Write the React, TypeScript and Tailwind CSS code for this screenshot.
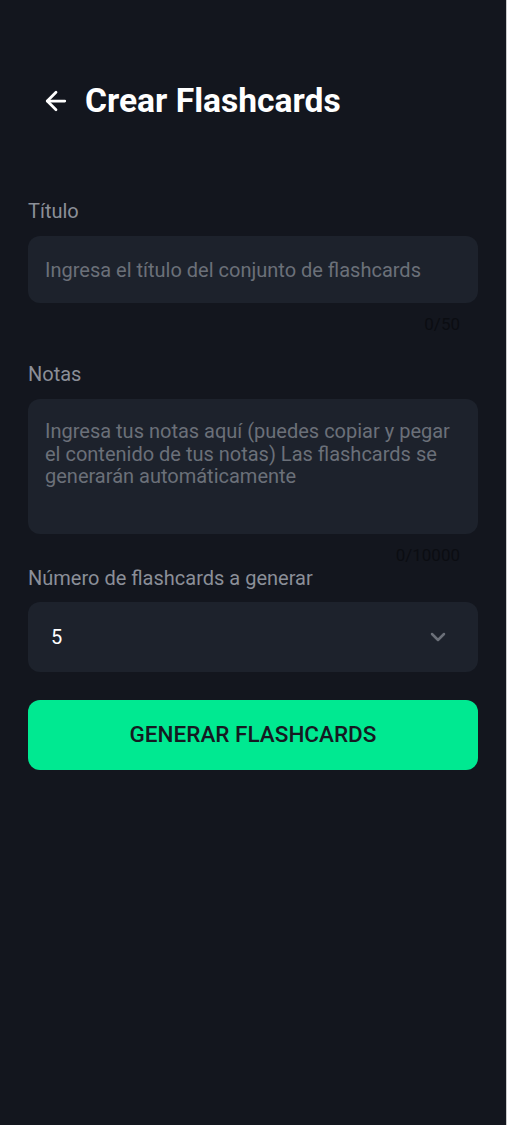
import React from "react";

export default function App() {
  const font = { fontFamily: "Roboto, 'Noto Sans', sans-serif" } as React.CSSProperties;
  return (
    <div className="flex min-h-[1125px] w-[507px] bg-[#c9cacc]" style={font}>
      <div className="w-[506px] min-h-[1125px] bg-[#13161e] px-7">
        <div className="flex items-center pt-[81px] pl-[13px] h-[121px]">
          <svg width="30" height="30" viewBox="0 0 24 24" fill="none" stroke="#ffffff" strokeWidth="2.2" strokeLinecap="round" strokeLinejoin="round" className="mr-[14px]">
            <path d="M19 12H5" />
            <path d="M12 19l-7-7 7-7" />
          </svg>
          <h1 className="text-[33.6px] leading-10 font-bold text-white">Crear Flashcards</h1>
        </div>

        <div className="mt-[78px] text-[20px] leading-6 text-[#8b8f98]">Título</div>
        <div className="mt-[13px] h-[67px] rounded-xl bg-[#1d222c] flex items-center px-[17px]">
          <span className="text-[20px] text-[#6b7079]">Ingresa el título del conjunto de flashcards</span>
        </div>
        <div className="mt-[11px] h-5 text-right pr-[18px] text-[17px] leading-5 text-[#0b0d12]">0/50</div>

        <div className="mt-[28px] text-[20px] leading-6 text-[#8b8f98]">Notas</div>
        <div className="mt-[13px] h-[135px] rounded-xl bg-[#1d222c] px-[17px] pt-[21px]">
          <p className="text-[20px] leading-[22.5px] text-[#6b7079]">
            Ingresa tus notas aquí (puedes copiar y pegar el contenido de tus notas) Las flashcards se generarán automáticamente
          </p>
        </div>
        <div className="mt-[11px] h-5 text-right pr-[18px] text-[17px] leading-5 text-[#0b0d12]">0/10000</div>

        <div className="mt-px text-[20px] leading-6 text-[#8b8f98]">Número de flashcards a generar</div>
        <div className="mt-[12px] h-[70px] rounded-xl bg-[#1d222c] flex items-center justify-between pl-[23px] pr-[28px]">
          <span className="text-[20px] text-white">5</span>
          <svg width="24" height="24" viewBox="0 0 24 24" fill="none" stroke="#6b7079" strokeWidth="2.5" strokeLinecap="round" strokeLinejoin="round">
            <path d="M6 9l6 6 6-6" />
          </svg>
        </div>

        <button className="mt-[28px] w-full h-[70px] rounded-xl bg-[#00e991] flex items-center justify-center">
          <span className="text-[22.5px] font-medium text-[#151a22]">GENERAR FLASHCARDS</span>
        </button>
      </div>
    </div>
  );
}
